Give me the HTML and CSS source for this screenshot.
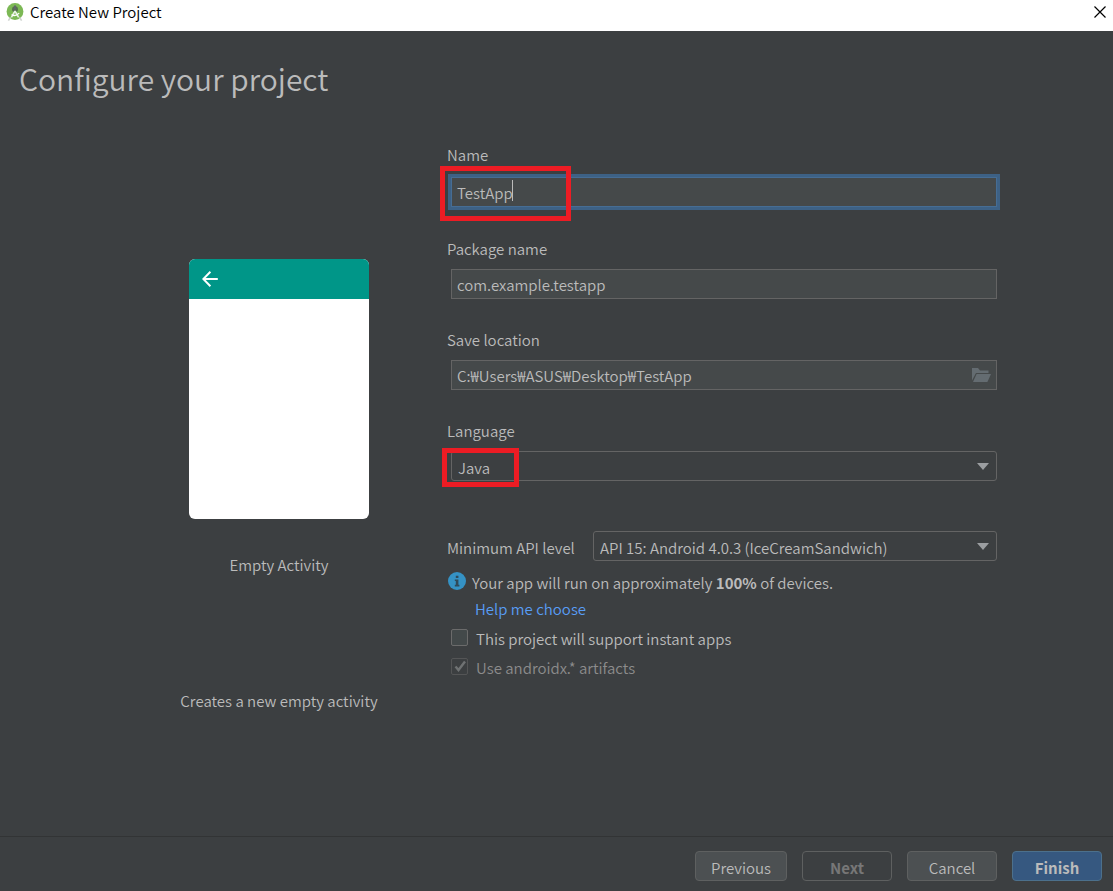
FILE: index.html
```html
<!DOCTYPE html>
<html lang="en">
<head>
<meta charset="utf-8">
<title>Create New Project</title>
<link rel="stylesheet" href="styles.css">
</head>
<body>
<header class="titlebar">
    <svg class="logo" viewBox="0 0 18 18" width="18" height="18">
        <circle cx="9" cy="8.5" r="8.4" fill="#7cb855"/>
        <circle cx="9" cy="6.2" r="3" fill="#55704f"/>
        <path d="M8 2.6h2v4H8z" fill="#5f6668"/>
        <path d="M9 8l-3.6 6.4M9 8l3.6 6.4" stroke="#e8f2e4" stroke-width="1.6" fill="none"/>
        <path d="M5.6 11.5q3.4 2.6 7.6-1.4" stroke="#fff" stroke-width="1.3" fill="none"/>
        <path d="M4.4 14.4L2.4 17.6M13.6 14.4l2 3.2" stroke="#cfd4d0" stroke-width="1.6"/>
    </svg>
    <span class="title">Create New Project</span>
    <button class="close" type="button" aria-label="Close">
        <svg viewBox="0 0 12 12" width="12" height="12"><path d="M.5 .5l11 11M11.5 .5l-11 11" stroke="#000" stroke-width="1.2"/></svg>
    </button>
</header>
<form class="wizard">
    <h1>Configure your project</h1>
    <div class="content">
        <section class="preview">
            <div class="phone">
                <div class="appbar">
                    <svg viewBox="0 0 16 16" width="16" height="16"><path d="M15.8 8H1.6M8.4 .8L1.3 8l7.1 7.2" stroke="#fff" stroke-width="2" fill="none"/></svg>
                </div>
            </div>
            <p class="template">Empty Activity</p>
            <p class="description">Creates a new empty activity</p>
        </section>
        <section class="settings">
            <div class="field">
                <label for="name">Name</label>
                <div class="box focused">
                    <input id="name" type="text" value="TestApp">
                    <span class="caret"></span>
                </div>
                <span class="mark mark-name"></span>
            </div>
            <div class="field">
                <label for="package">Package name</label>
                <div class="box"><input id="package" type="text" value="com.example.testapp"></div>
            </div>
            <div class="field">
                <label for="location">Save location</label>
                <div class="box">
                    <input id="location" type="text" value="C:₩Users₩ASUS₩Desktop₩TestApp">
                    <button class="browse" type="button" aria-label="Browse">
                        <svg viewBox="0 0 19 14" width="19" height="14"><path d="M0 0h6l2 2.4h8.5V5H4L0 12.5z" fill="#646c71"/><path d="M4.6 6H19l-3.6 8H1z" fill="#646c71"/></svg>
                    </button>
                </div>
            </div>
            <div class="field">
                <label for="language">Language</label>
                <div class="box">
                    <select id="language"><option>Java</option><option>Kotlin</option></select>
                    <svg class="arrow" viewBox="0 0 12 7" width="12" height="7"><path d="M0 0h12L6 7z" fill="#9b9ea1"/></svg>
                </div>
                <span class="mark mark-language"></span>
            </div>
            <div class="api">
                <label for="api">Minimum API level</label>
                <div class="box">
                    <select id="api"><option>API 15: Android 4.0.3 (IceCreamSandwich)</option></select>
                    <svg class="arrow" viewBox="0 0 12 7" width="12" height="7"><path d="M0 0h12L6 7z" fill="#9b9ea1"/></svg>
                </div>
            </div>
            <div class="info">
                <svg viewBox="0 0 18 18" width="18" height="18"><circle cx="9" cy="9" r="9" fill="#3592c4"/><path d="M7.8 3.8h2.6v2.2H7.8zM6.8 7.4h3.6v5.4h1v1.6H6.8v-1.6h1V9h-1z" fill="#2f4a5a"/></svg>
                <p>Your app will run on approximately <b>100%</b> of devices.</p>
            </div>
            <a class="help" href="#">Help me choose</a>
            <div class="check">
                <input id="instant" type="checkbox">
                <label for="instant">This project will support instant apps</label>
            </div>
            <div class="check disabled">
                <input id="androidx" type="checkbox" checked disabled>
                <label for="androidx">Use androidx.* artifacts</label>
                <svg class="tick" viewBox="0 0 12 12" width="12" height="12"><path d="M1.5 6.5l3 3.5L11 1.5" stroke="#6f7273" stroke-width="2.4" fill="none"/></svg>
            </div>
        </section>
    </div>
</form>
<footer class="buttons">
    <button type="button">Previous</button>
    <button type="button" class="next" disabled>Next</button>
    <button type="button">Cancel</button>
    <button type="button" class="finish">Finish</button>
</footer>
</body>
</html>
```

FILE: styles.css
```css
* {
    box-sizing: border-box;
}
body {
    margin: 0;
    min-height: 100vh;
    display: flex;
    flex-direction: column;
    background-color: #3c3f41;
    color: #bbbbbb;
    font-family: "Noto Sans CJK KR", "Noto Sans", sans-serif;
    font-size: 15px;
    font-weight: 350;
    line-height: 20px;
}
p, h1 {
    margin: 0;
}
b {
    font-weight: bold;
}
button, input, select {
    font: inherit;
    color: inherit;
}
svg {
    display: block;
}
.titlebar {
    display: flex;
    align-items: center;
    height: 31px;
    padding: 0 7px 7px 6px;
    background-color: #ffffff;
    color: #000000;
}
.title {
    flex: 1;
    margin-left: 6px;
}
.close {
    padding: 0;
    border: 0;
    background: none;
}
.wizard {
    flex: 1;
}
h1 {
    padding: 27px 19px 0;
    font-size: 30px;
    line-height: 40px;
    font-weight: 350;
}
.content {
    display: grid;
    grid-template-columns: 336px 1fr;
    padding: 47px 113px 24px 111px;
}
.preview {
    display: flex;
    flex-direction: column;
    align-items: center;
    padding-top: 114px;
}
.phone {
    width: 180px;
    height: 260px;
    border-radius: 6px;
    background-color: #ffffff;
    overflow: hidden;
}
.appbar {
    height: 40px;
    padding: 12px 13px;
    background-color: #009688;
}
.template {
    margin-top: 36px;
}
.description {
    margin-top: 116px;
}
.field {
    position: relative;
    margin-bottom: 31px;
}
.field label {
    display: block;
    margin-bottom: 10px;
}
.box {
    position: relative;
    margin: 0 3px 0 4px;
}
.box input, .box select {
    display: block;
    width: 100%;
    height: 30px;
    padding: 0 5px;
    border: 1px solid #646464;
    border-radius: 0;
    outline: none;
    background-color: #45494a;
}
.box select {
    appearance: none;
    padding: 3px 6px 0;
    border-radius: 3px;
    background-color: #3c3f41;
}
.focused {
    margin-bottom: 32px;
    padding-top: 2px;
}
.focused input {
    border-color: #466d94;
    box-shadow: 0 0 0 3px #3d6185;
}
.caret {
    position: absolute;
    left: 61px;
    top: 5px;
    width: 1px;
    height: 21px;
    background-color: #bbbbbb;
}
.browse {
    position: absolute;
    right: 6px;
    top: 8px;
    padding: 0;
    border: 0;
    background: none;
}
.arrow {
    position: absolute;
    right: 8px;
    top: 12px;
    pointer-events: none;
}
/* red highlight frames */
.mark {
    position: absolute;
    border: 5px solid #ed1c24;
    pointer-events: none;
}
.mark-name {
    left: -7px;
    top: 21px;
    width: 131px;
    height: 55px;
}
.mark-language {
    left: -5px;
    top: 27px;
    width: 77px;
    height: 39px;
}
.api {
    display: flex;
    align-items: center;
    margin-top: 50px;
}
.api label {
    width: 142px;
    padding-top: 4px;
}
.api .box {
    flex: 1;
}
.info {
    display: flex;
    gap: 6px;
    margin-top: 11px;
    padding-left: 1px;
}
.info p {
    padding-top: 1px;
}
.help {
    display: block;
    margin: 6px 0 10px 28px;
    color: #589df6;
    text-decoration: none;
}
.check {
    position: relative;
    display: flex;
    align-items: center;
    gap: 8px;
    margin-bottom: 9px;
    padding-left: 4px;
}
.check input {
    appearance: none;
    width: 17px;
    height: 17px;
    margin: 0 0 3px;
    border: 1px solid #6b6b6b;
    border-radius: 2px;
    background-color: #43494a;
}
.disabled {
    color: #8c8c8c;
}
.disabled input {
    border-color: #545556;
    background-color: #3c3f41;
}
.tick {
    position: absolute;
    left: 7px;
    top: 2px;
    pointer-events: none;
}
.buttons {
    display: flex;
    justify-content: flex-end;
    gap: 15px;
    padding: 14px 11px 10px;
    border-top: 1px solid #323435;
}
.buttons button {
    min-width: 90px;
    height: 30px;
    padding: 3px 15px 0;
    border: 1px solid #5e6060;
    border-radius: 4px;
    background-color: #4c5052;
}
.buttons .next {
    background-color: #3c3f41;
    color: #777777;
    font-weight: bold;
}
.buttons .finish {
    border-color: #4c708c;
    background-color: #365880;
    font-weight: bold;
}
```
